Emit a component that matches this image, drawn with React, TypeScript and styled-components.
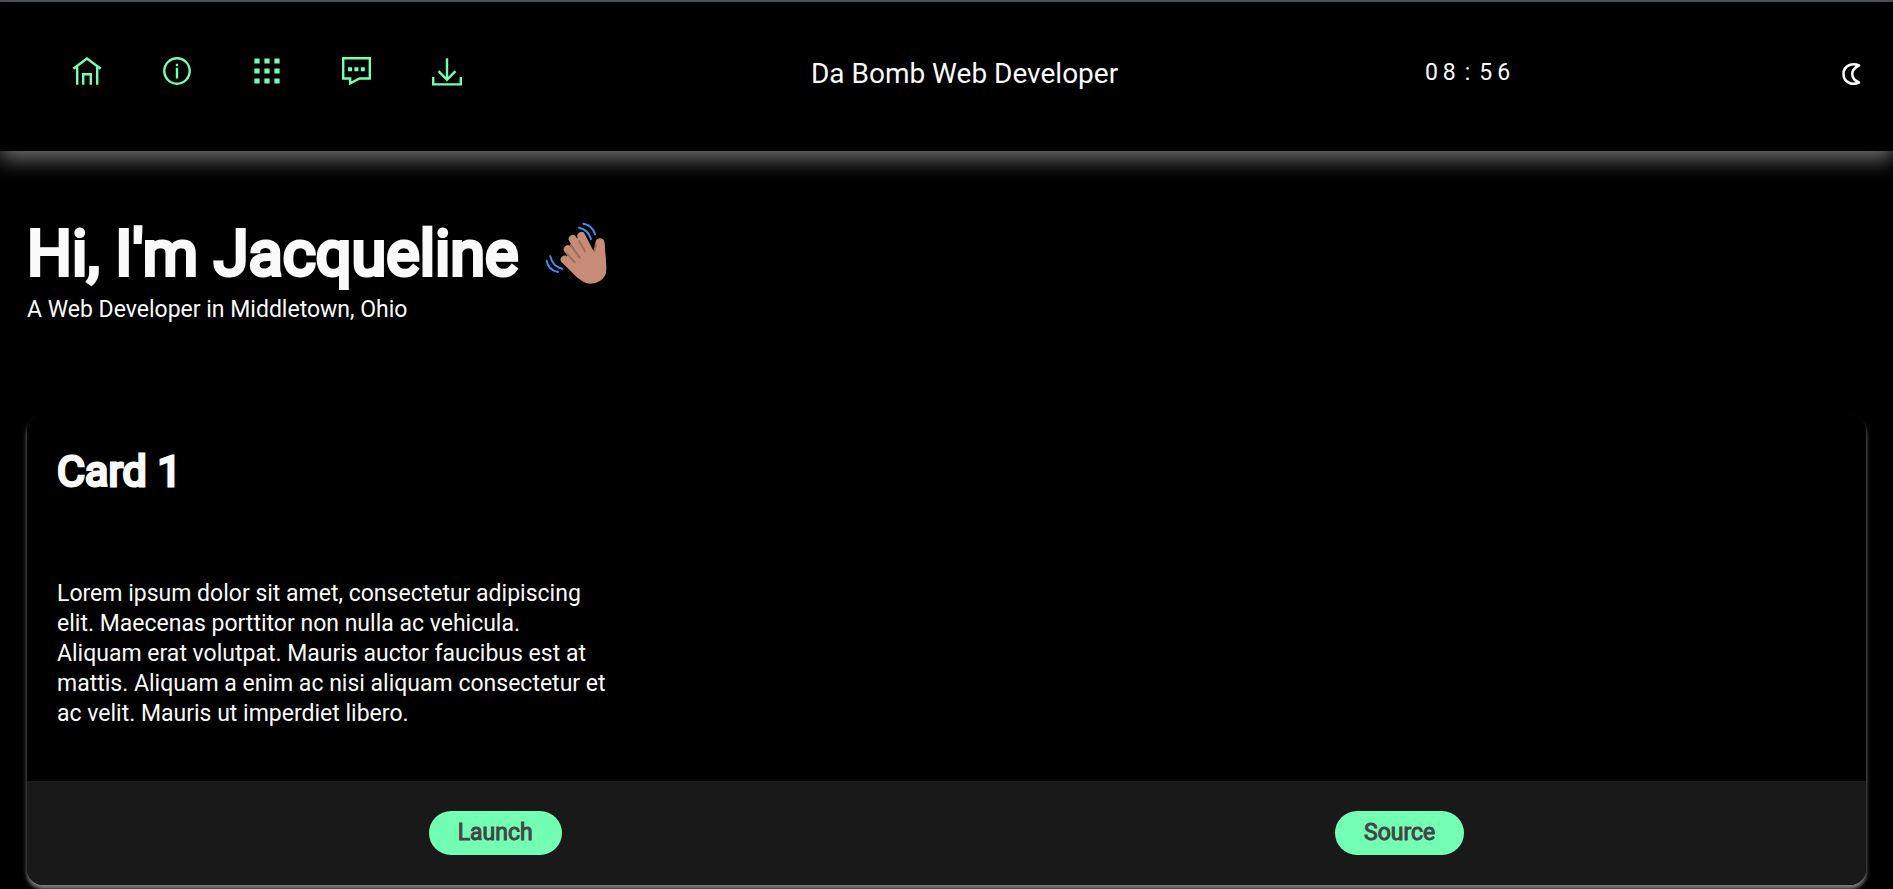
import React from "react";
import styled, { createGlobalStyle } from "styled-components";

const mint = "#72ffb3";
const light = "#fafafa";
const skin = "#c68c78";

const GlobalStyle = createGlobalStyle`
  *, *::before, *::after { box-sizing: border-box; }
  body {
    margin: 0;
    background: #000;
    color: ${light};
    font-family: Roboto, "Liberation Sans", sans-serif;
    font-size: 23px;
    line-height: 30px;
  }
  h1, h2, p { margin: 0; }
`;

const Page = styled.div`
  border-top: 2px solid #454b5c;
`;

const Header = styled.header`
  display: grid;
  grid-template-columns: 54fr 99fr 24fr 23fr;
  height: 149px;
  padding: 0 31px 7px 2px;
  align-items: center;
  box-shadow: 0 8px 20px #707070;
`;

const Nav = styled.nav`
  display: flex;
  gap: 60px;
  padding: 0 0 4px 70px;
`;

const IconLink = styled.a`
  display: flex;
  color: ${mint};
`;

const Icon = styled.svg`
  display: block;
  width: 30px;
  height: 30px;
  fill: none;
  stroke: currentColor;
  stroke-width: 2.4;
`;

const Brand = styled.div`
  padding-top: 2px;
  font-size: 28px;
  text-align: center;
`;

const Clock = styled.time`
  letter-spacing: 5px;
`;

const Colon = styled.span`
  padding: 0 4px;
`;

const ThemeButton = styled.button`
  justify-self: end;
  display: flex;
  padding: 2px 0 0;
  border: 0;
  background: none;
  color: ${light};
`;

const Moon = styled.svg`
  width: 24px;
  height: 24px;
  fill: none;
  stroke: currentColor;
  stroke-width: 2.6;
  stroke-linejoin: round;
`;

const Main = styled.main`
  padding: 64px 27px 30px;
`;

const Greeting = styled.div`
  display: flex;
  align-items: center;
  gap: 26px;
`;

const Title = styled.h1`
  font-size: 63px;
  font-weight: 400;
  line-height: 78px;
  -webkit-text-stroke: 4px currentColor;
  paint-order: stroke fill;
`;

const Subtitle = styled.p`
  margin-top: 2px;
`;

const Hand = styled.svg`
  width: 64px;
  height: 64px;
  fill: none;
  stroke-linecap: round;
  stroke-linejoin: round;
`;

const Card = styled.article`
  margin-top: 90px;
  border-radius: 16px;
  background: #000;
  overflow: hidden;
  box-shadow: 0 4px 4px #808080;
`;

const CardBody = styled.div`
  padding: 30px;
`;

const CardTitle = styled.h2`
  font-size: 43px;
  font-weight: 400;
  line-height: 52px;
  -webkit-text-stroke: 3px currentColor;
`;

const CardText = styled.p`
  max-width: 550px;
  padding: 82px 0 22px;
`;

const CardActions = styled.div`
  display: flex;
  justify-content: space-around;
  padding: 30px 15px;
  background: #191919;
`;

const PillButton = styled.button`
  height: 44px;
  padding: 0 29px;
  border: 0;
  border-radius: 22px;
  background: ${mint};
  color: #444;
  font: 400 23px/44px Roboto, "Liberation Sans", sans-serif;
  -webkit-text-stroke: 1px currentColor;
`;

export default function App() {
  return (
    <Page>
      <GlobalStyle />
      <Header>
        <Nav aria-label="Main">
          <IconLink href="#home" aria-label="Home">
            <Icon viewBox="0 0 30 30">
              <path d="M1.300 12.700 15 2.500l13.700 10.200M5.200 10v18.700M25.200 10v18.700M11.200 28.700V18.300h7.600v10.400" />
            </Icon>
          </IconLink>
          <IconLink href="#about" aria-label="About">
            <Icon viewBox="0 0 30 30">
              <circle cx="15" cy="15" r="12.700" />
              <path d="M15 11.800v10.800M15 7.800v2.400" />
            </Icon>
          </IconLink>
          <IconLink href="#projects" aria-label="Projects">
            <Icon viewBox="0 0 30 30">
              <path
                strokeWidth="5.200"
                d="M2.400 5h5.200m4.800 0h5.200m4.800 0h5.200M2.400 15h5.200m4.800 0h5.200m4.800 0h5.200M2.400 25h5.200m4.800 0h5.200m4.800 0h5.200"
              />
            </Icon>
          </IconLink>
          <IconLink href="#contact" aria-label="Contact">
            <Icon viewBox="0 0 30 30">
              <path d="M1.200 2.200h26.600v20.300H17.500l-9.300 4.800v-4.800h-7z" />
              <path strokeWidth="4" d="M6 13.200h4m2.400 0h4m2.400 0h4" />
            </Icon>
          </IconLink>
          <IconLink href="#resume" aria-label="Download resume">
            <Icon viewBox="0 0 30 30">
              <path d="M15 2.300v21.700M6.500 15.200l8.500 8.600 8.500-8.600M1.200 21v7.400h27.600V21" />
            </Icon>
          </IconLink>
        </Nav>
        <Brand>Da Bomb Web Developer</Brand>
        <Clock>
          08<Colon>:</Colon>56
        </Clock>
        <ThemeButton type="button" aria-label="Toggle dark mode">
          <Moon viewBox="0 0 24 24">
            <path d="M21 3.500C15 .5 5.500 3 5.500 12S15 23.500 21 20.500C12 16.500 12 7.500 21 3.500z" />
          </Moon>
        </ThemeButton>
      </Header>
      <Main>
        <Greeting>
          <Title>Hi, I'm Jacqueline</Title>
          <Hand viewBox="18 21 192 192" role="img" aria-label="Waving hand">
            <path
              fill={skin}
              d="M80 145 115 183Q135 206 158 206 188 206 202 180 207 168 204 140L199 85 172 85Q172 105 162 110L140 60 105 75z"
            />
            <path stroke={skin} strokeWidth="24" d="M130 63 158 118M104 72l36 60M89 103l40 50M80 134l45 44" />
            <path stroke={skin} strokeWidth="27" d="M186 83l4 60" />
            <path stroke="#a06c5c" strokeWidth="6" d="M123 78l18 30M98 90l27 38M87 116l23 26M173 88q0 12-4 19" />
            <path
              stroke="#448cf5"
              strokeWidth="6"
              d="M136 26Q163 30 171 58M123 38Q150 43 159 72M26 137Q30 165 60 171M37 124Q43 153 72 161"
            />
          </Hand>
        </Greeting>
        <Subtitle>A Web Developer in Middletown, Ohio</Subtitle>
        <Card>
          <CardBody>
            <CardTitle>Card 1</CardTitle>
            <CardText>
              Lorem ipsum dolor sit amet, consectetur adipiscing elit. Maecenas porttitor non nulla ac vehicula.
              Aliquam erat volutpat. Mauris auctor faucibus est at mattis. Aliquam a enim ac nisi aliquam
              consectetur et ac velit. Mauris ut imperdiet libero.
            </CardText>
          </CardBody>
          <CardActions>
            <PillButton type="button">Launch</PillButton>
            <PillButton type="button">Source</PillButton>
          </CardActions>
        </Card>
      </Main>
    </Page>
  );
}
